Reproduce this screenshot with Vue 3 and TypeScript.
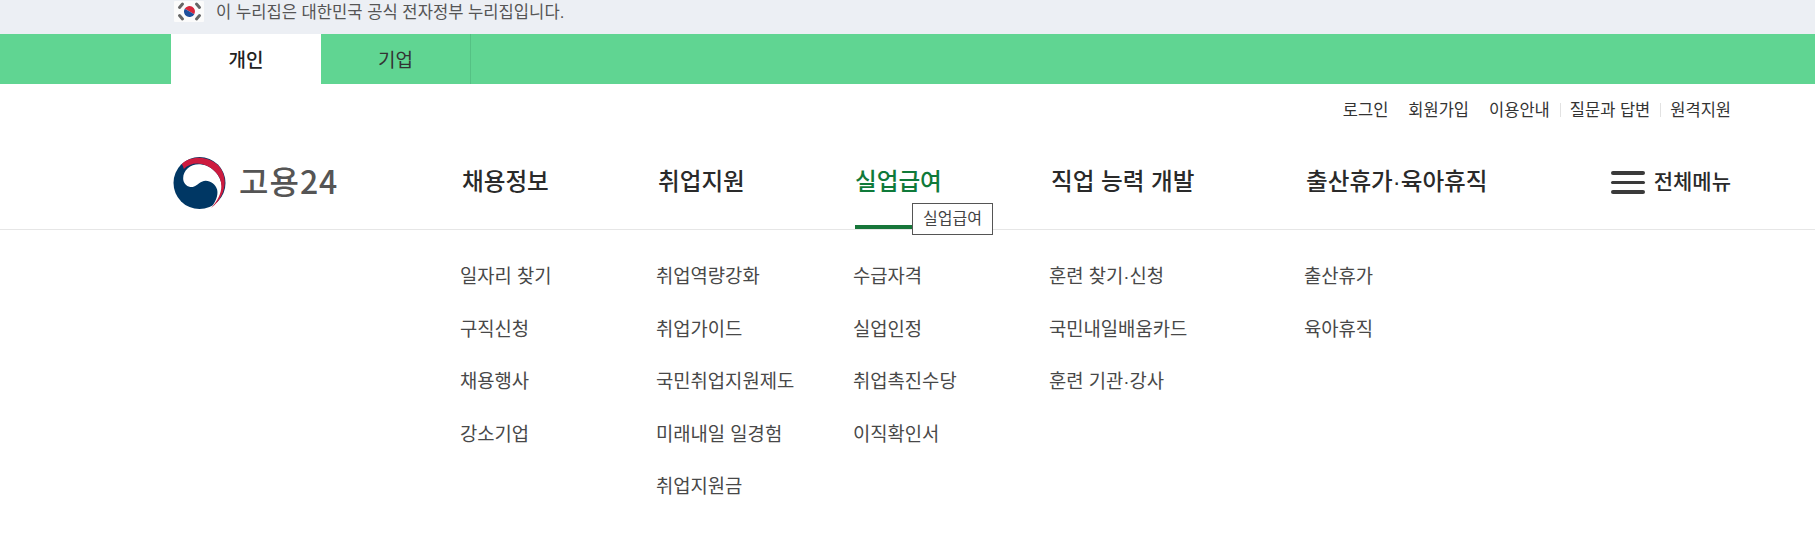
<script setup lang="ts">
interface MenuColumn {
  title: string
  width: number
  links: string[]
}

const utilLinks = [
  { label: '로그인', sep: false },
  { label: '회원가입', sep: false },
  { label: '이용안내', sep: false },
  { label: '질문과 답변', sep: true },
  { label: '원격지원', sep: true },
]

const columns: MenuColumn[] = [
  { title: '채용정보', width: 196, links: ['일자리 찾기', '구직신청', '채용행사', '강소기업'] },
  { title: '취업지원', width: 197, links: ['취업역량강화', '취업가이드', '국민취업지원제도', '미래내일 일경험', '취업지원금'] },
  { title: '실업급여', width: 196, links: ['수급자격', '실업인정', '취업촉진수당', '이직확인서'] },
  { title: '직업 능력 개발', width: 255, links: ['훈련 찾기·신청', '국민내일배움카드', '훈련 기관·강사'] },
  { title: '출산휴가·육아휴직', width: 300, links: ['출산휴가', '육아휴직'] },
]
</script>

<template>
  <div class="page">
    <div class="gov-banner">
      <div class="inner banner-inner">
        <svg class="flag" width="30" height="21" viewBox="0 0 30 21">
          <rect width="30" height="21" rx="1" fill="#fbfbfb" />
          <g transform="rotate(30 15.5 10.5)">
            <path d="M10 10.5a5.5 5.5 0 0 1 11 0z" fill="#d8263c" />
            <path d="M10 10.5a5.5 5.5 0 0 0 11 0z" fill="#1d4f9c" />
          </g>
          <g stroke="#666" stroke-width="3" stroke-linecap="round">
            <path d="M5.5 6.5l3-3.4M22.5 3.1l3 3.4M5.5 14.5l3 3.4M22.5 17.9l3-3.4" />
          </g>
        </svg>
        <span class="banner-text">이 누리집은 대한민국 공식 전자정부 누리집입니다.</span>
      </div>
    </div>

    <div class="tab-bar">
      <div class="inner tabs">
        <a class="tab active">개인</a>
        <a class="tab">기업</a>
      </div>
    </div>

    <div class="util">
      <div class="inner util-inner">
        <a v-for="link in utilLinks" :key="link.label" class="util-link" :class="{ sep: link.sep }">{{ link.label }}</a>
      </div>
    </div>

    <header class="gnb">
      <div class="inner gnb-inner">
        <div class="logo">
          <svg width="53" height="52" viewBox="14 14 158 156">
            <circle cx="93" cy="92" r="78" fill="#003764" />
            <path d="M44 78C44 52 68 34 95 36C138 40 170 85 158 125C152 143 140 155 128 165C140 150 150 130 146 112C140 92 118 80 100 88C85 95 80 106 65 104C53 102 44 92 44 78Z" fill="#fff" />
            <path d="M40 35C64 12 114 8 148 38C180 70 176 130 128 167C162 130 170 88 140 58C110 28 70 26 46 50C45 45 43 40 40 35Z" fill="#cd1b3f" />
          </svg>
          <span class="logo-text">고용24</span>
        </div>
        <nav class="gnb-nav">
          <a
            v-for="col in columns"
            :key="col.title"
            class="gnb-item"
            :class="{ current: col.title === '실업급여' }"
            :style="{ width: col.width + 'px' }"
          >
            <span class="gnb-label">{{ col.title }}</span>
            <span v-if="col.title === '실업급여'" class="tip">{{ col.title }}</span>
          </a>
        </nav>
        <a class="all-menu">
          <span class="burger"><i /><i /><i /></span>
          전체메뉴
        </a>
      </div>
    </header>

    <div class="inner sub">
      <ul v-for="col in columns" :key="col.title" class="sub-col" :style="{ width: col.width + 'px' }">
        <li v-for="link in col.links" :key="link">{{ link }}</li>
      </ul>
    </div>
  </div>
</template>

<style>
html, body { margin: 0; background: #fff; }
</style>

<style scoped>
.page {
  width: 1815px;
  height: 539px;
  overflow: hidden;
  font-family: "Liberation Sans", "Noto Sans CJK KR", sans-serif;
  color: #222;
}

.inner {
  width: 1560px;
  margin-left: 171px;
}

.gov-banner {
  height: 34px;
  background: #eceff4;
}

.banner-inner {
  display: flex;
  align-items: flex-start;
  gap: 12px;
  padding: 1px 0 0 3px;
  box-sizing: border-box;
  font-size: 16.6px;
  line-height: 22px;
  color: #555;
}

.banner-text {
  padding-top: 1px;
}

.tab-bar {
  height: 50px;
  background: #60d592;
}

.tabs {
  display: flex;
  height: 50px;
}

.tab {
  width: 150px;
  display: flex;
  align-items: center;
  justify-content: center;
  padding-bottom: 2px;
  font-size: 19px;
  color: #333;
  box-sizing: border-box;
}

.tab:not(.active) {
  border-right: 1px solid #55c184;
}

.tab.active {
  background: #fff;
  font-weight: 500;
  color: #222;
}

.util-inner {
  display: flex;
  justify-content: flex-end;
  height: 48px;
  padding-top: 14px;
  box-sizing: border-box;
}

.util-link {
  font-size: 16.5px;
  line-height: 24px;
  color: #333;
  margin-left: 20px;
  position: relative;
}

.util-link.sep::before {
  content: "";
  position: absolute;
  left: -10px;
  top: 5px;
  height: 14px;
  width: 1px;
  background: #e2e2e2;
}

.gnb {
  height: 98px;
  border-bottom: 1px solid #e6e6e6;
  box-sizing: border-box;
}

.gnb-inner {
  display: flex;
  height: 97px;
}

.logo {
  width: 291px;
  display: flex;
  align-items: flex-start;
  padding: 25px 0 0 2px;
  box-sizing: border-box;
  gap: 13px;
}

.logo-text {
  font-family: "Noto Sans CJK KR", sans-serif;
  font-size: 32px;
  font-weight: 500;
  line-height: 50px;
  color: #555;
  letter-spacing: 1px;
  margin-top: -2px;
}

.gnb-nav {
  display: flex;
  width: 1144px;
}

.gnb-item {
  position: relative;
  font-size: 23.6px;
  font-weight: 500;
  line-height: 30px;
  padding-top: 35px;
  color: #2a2a2a;
  box-sizing: border-box;
}

.gnb-label {
  display: inline-block;
  height: 62px;
  box-sizing: border-box;
}

.gnb-item.current {
  color: #0f7a3a;
}

.gnb-item.current .gnb-label {
  border-bottom: 4px solid #17763a;
}

.tip {
  position: absolute;
  left: 57px;
  top: 71px;
  width: 81px;
  height: 32px;
  border: 1px solid #555;
  background: #fff;
  box-sizing: border-box;
  font-size: 16px;
  font-weight: 400;
  line-height: 29px;
  text-align: center;
  color: #444;
}

.all-menu {
  flex: 1;
  display: flex;
  align-items: flex-start;
  justify-content: flex-end;
  font-size: 21px;
  font-weight: 500;
  line-height: 28px;
  padding-top: 36px;
  white-space: nowrap;
  color: #2a2a2a;
}

.burger {
  display: flex;
  flex-direction: column;
  gap: 6px;
  width: 34px;
  margin: 3px 9px 0 0;
}

.burger i {
  display: block;
  height: 3.5px;
  background: #3a3a3a;
  border-radius: 2px;
}

.sub {
  display: flex;
  padding: 34px 0 0 289px;
  box-sizing: border-box;
}

.sub-col {
  list-style: none;
  margin: 0;
  padding: 0;
}

.sub-col li {
  font-size: 18.8px;
  line-height: 26px;
  margin-bottom: 26.5px;
  color: #484848;
  white-space: nowrap;
}
</style>
